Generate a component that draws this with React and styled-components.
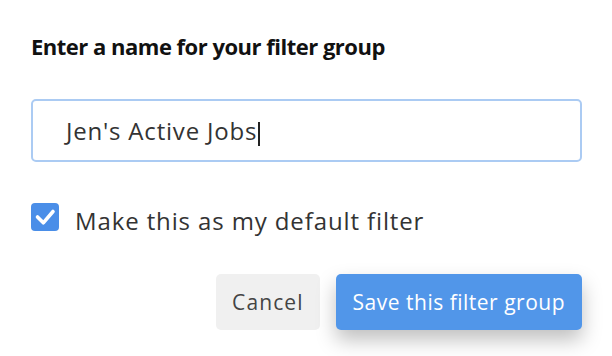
import styled, { createGlobalStyle } from "styled-components";

const GlobalStyle = createGlobalStyle`
  html, body {
    margin: 0;
    padding: 0;
    background: #fff;
  }
  body {
    font-family: "Open Sans", "Liberation Sans", sans-serif;
  }
`;

const Dialog = styled.div`
  width: 612px;
  height: 356px;
  box-sizing: border-box;
  padding: 32px 30px 0 31px;
  display: flex;
  flex-direction: column;
`;

const Title = styled.h2`
  margin: 0;
  font-size: 22px;
  line-height: 28px;
  font-weight: 700;
  letter-spacing: -0.5px;
  color: #111;
`;

const NameField = styled.div`
  margin-top: 39px;
  height: 63px;
  box-sizing: border-box;
  border: 2px solid #abcbf3;
  border-radius: 5px;
  display: flex;
  align-items: center;
  padding-left: 33px;
  font-size: 24px;
  letter-spacing: 0.8px;
  color: #333;
`;

const Caret = styled.span`
  display: inline-block;
  width: 2px;
  height: 24px;
  background: #222;
  margin-left: 1px;
  vertical-align: -6px;
`;

const CheckRow = styled.label`
  margin-top: 41px;
  display: flex;
  align-items: flex-start;
  gap: 16px;
`;

const Box = styled.span`
  width: 28px;
  height: 28px;
  border-radius: 4px;
  background: #4a8ee8;
  display: flex;
  align-items: center;
  justify-content: center;
`;

const LabelText = styled.span`
  padding-top: 6px;
  font-size: 24px;
  line-height: 24px;
  letter-spacing: 0.88px;
  color: #333;
`;

const Actions = styled.div`
  margin-top: 41px;
  display: flex;
  justify-content: flex-end;
  gap: 16px;
`;

const Button = styled.button`
  height: 56px;
  border: none;
  border-radius: 5px;
  font-family: inherit;
  font-size: 21px;
  padding: 0 ${(p) => (p.primary ? "17px" : "16px")};
  letter-spacing: ${(p) => (p.primary ? "0.5px" : "1.1px")};
  background: ${(p) => (p.primary ? "#5196e9" : "#f0f0f0")};
  color: ${(p) => (p.primary ? "#fff" : "#444")};
  box-shadow: ${(p) => (p.primary ? "0 10px 20px rgba(0,0,0,0.25)" : "none")};
`;

export default function App() {
  return (
    <>
      <GlobalStyle />
      <Dialog>
        <Title>Enter a name for your filter group</Title>
        <NameField>
          <span>
            Jen's Active Jobs
            <Caret />
          </span>
        </NameField>
        <CheckRow>
          <Box>
            <svg width="28" height="28" viewBox="0 0 28 28">
              <path d="M6.5 14 L12.3 19.8 L22 8.5" fill="none" stroke="#fff" strokeWidth="3.6" strokeLinecap="round" strokeLinejoin="round" />
            </svg>
          </Box>
          <LabelText>Make this as my default filter</LabelText>
        </CheckRow>
        <Actions>
          <Button>Cancel</Button>
          <Button primary>Save this filter group</Button>
        </Actions>
      </Dialog>
    </>
  );
}
